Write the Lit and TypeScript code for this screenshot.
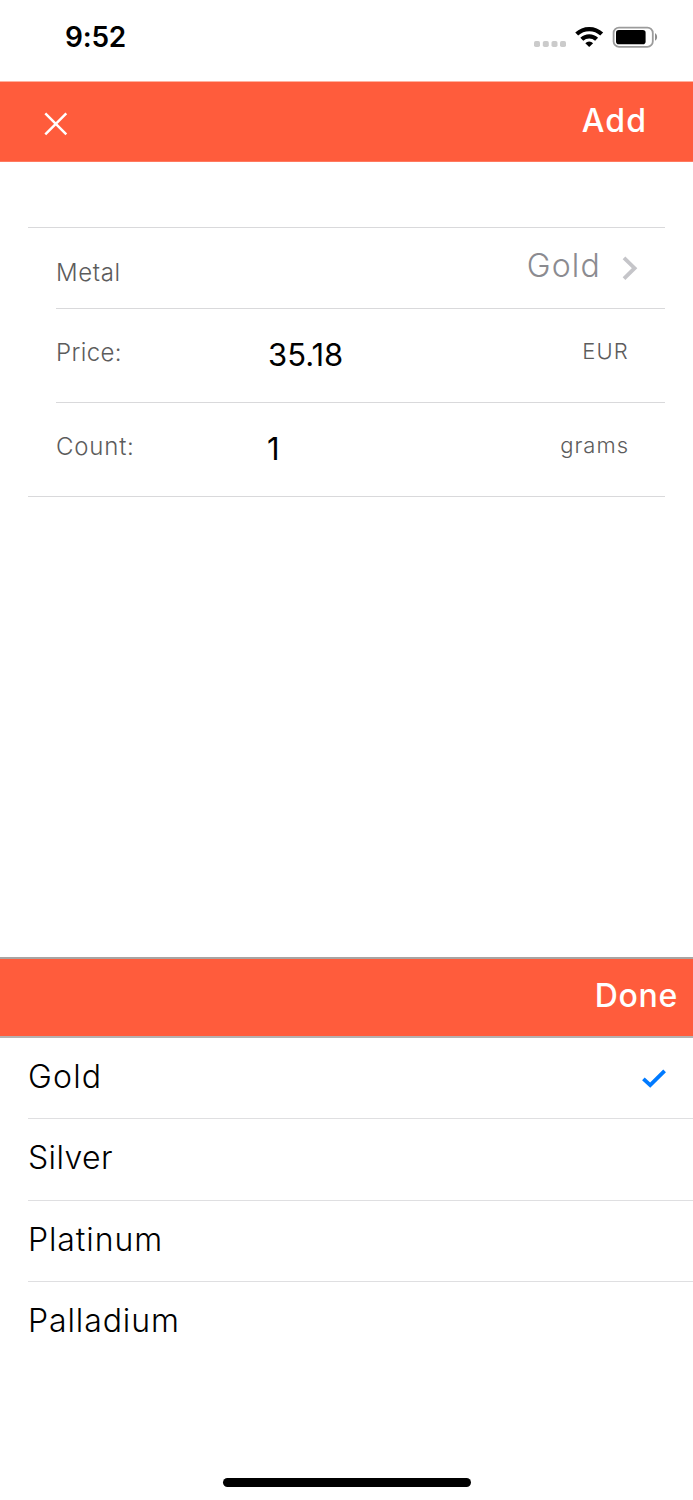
import { LitElement, html, css } from "lit";
import { customElement, state } from "lit/decorators.js";

@customElement("status-bar")
class StatusBar extends LitElement {
  static styles = css`
    :host { display: flex; justify-content: space-between; height: 81px; box-sizing: border-box; padding: 20px 32px 0 65px; }
    .time { font-size: 28px; line-height: 35px; font-weight: 600; letter-spacing: -0.2px; }
    .icons { width: 128px; height: 32px; }
  `;
  render() {
    return html`
      <span class="time">9:52</span>
      <svg class="icons" viewBox="533 20 128 32">
        <g fill="#cbcbcb">
          <rect x="534" y="41" width="6" height="6" rx="1.8" />
          <rect x="542.8" y="41" width="6" height="6" rx="1.8" />
          <rect x="551.5" y="41" width="6" height="6" rx="1.8" />
          <rect x="560" y="41" width="6" height="6" rx="1.8" />
        </g>
        <g fill="none" stroke="#000" stroke-width="4.2">
          <path d="M576.7 34.1a18 18 0 0 1 25 0" />
          <path d="M581.8 39.3a10.6 10.6 0 0 1 14.8 0" />
        </g>
        <path d="M585.3 43.2a5.6 5.6 0 0 1 7.8 0L589.2 47z" />
        <rect x="613.6" y="27.6" width="39.2" height="19.2" rx="5.4" fill="none" stroke="#9b9b9b" stroke-width="1.8" />
        <rect x="616" y="30" width="29.6" height="14.2" rx="2.8" />
        <path d="M655 33.3c2.8 1 2.8 6.4 0 7.4z" fill="#8e8e8e" />
      </svg>
    `;
  }
}

@customElement("app-root")
class AppRoot extends LitElement {
  @state() private metals = ["Gold", "Silver", "Platinum", "Palladium"];
  @state() private selected = "Gold";

  static styles = css`
    :host { display: flex; flex-direction: column; height: 1500px; background: #fff; color: #000; font-family: Inter, "Open Sans", sans-serif; overflow: hidden; }
    .nav { display: flex; justify-content: space-between; height: 81px; box-sizing: border-box; background: #ff5c3c; color: #fff; padding: 17px 47px 0 43px; border-top: 1px solid #ffb19f; border-bottom: 1px solid #ff7a60; }
    .close { width: 26px; height: 26px; margin-top: 12px; }
    .action { font-size: 32px; line-height: 44px; font-weight: 500; }
    .add { letter-spacing: 1.1px; margin-right: -1.1px; }
    .form { margin: 65px 28px 0; border-top: 1px solid #d9d9db; border-bottom: 1px solid #d9d9db; padding-left: 28px; }
    .row { display: grid; grid-template-columns: 211px 1fr auto; height: 94px; box-sizing: border-box; border-bottom: 1px solid #d9d9db; }
    .metal { height: 81px; }
    .last { height: 93px; border-bottom: 0; }
    .label { font-size: 24px; line-height: 30px; color: #5c5c5c; padding-top: 29px; font-weight: 350; letter-spacing: 0.4px; }
    .metal .label { padding-top: 30px; letter-spacing: 0.6px; }
    .last .label { letter-spacing: 0.8px; }
    .value { font-size: 31px; line-height: 40px; padding: 26px 0 0 1px; }
    .last .value { padding-left: 0; }
    .unit { font-size: 22px; line-height: 30px; color: #5c5c5c; padding: 27px 37px 0 0; font-weight: 350; }
    .eur { letter-spacing: 1.2px; margin-right: -1px; }
    .grams { letter-spacing: 1px; margin-right: -1px; }
    .choice { display: flex; color: #8b8b90; font-size: 32px; line-height: 40px; padding: 18px 27px 0 0; font-weight: 350; letter-spacing: 1.2px; }
    .chev { width: 16px; height: 24px; margin: 10px 0 0 21px; }
    .sheet { margin-top: auto; height: 543px; display: flex; flex-direction: column; }
    .toolbar { display: flex; justify-content: flex-end; height: 81px; box-sizing: border-box; background: #ff5c3c; color: #fff; border-top: 2px solid #a9a4a2; border-bottom: 2px solid #b5b1b0; padding: 15px 15px 0 0; }
    .toolbar .action { letter-spacing: 0.7px; }
    .option { display: flex; justify-content: space-between; height: 81.3px; box-sizing: border-box; margin-left: 28px; border-bottom: 1px solid #dfdfe1; font-size: 32px; line-height: 40px; padding: 19px 26px 0 0; letter-spacing: 0.9px; font-weight: 350; }
    .option:nth-child(1) { letter-spacing: 1.2px; }
    .option:nth-child(2) { letter-spacing: 0.4px; }
    .option:last-child { border-bottom: 0; }
    .check { width: 26px; height: 22px; margin-top: 11px; }
    .home { width: 248px; height: 9px; border-radius: 5px; background: #000; margin: auto auto 13px 222.5px; }
  `;

  render() {
    return html`
      <status-bar></status-bar>
      <div class="nav">
        <svg class="close" viewBox="0 0 26 26" fill="none" stroke="#fff" stroke-width="2.5"><path d="M2.3 2.3 23.3 23.3M23.3 2.3 2.3 23.3" /></svg>
        <span class="action add">Add</span>
      </div>
      <div class="form">
        <div class="row metal">
          <span class="label">Metal</span><span></span>
          <span class="choice">${this.selected}<svg class="chev" viewBox="0 0 16 24" fill="none" stroke="#c5c5c9" stroke-width="3.8"><path d="M2 1.8 12.6 12.2 2 22.6" /></svg></span>
        </div>
        <div class="row">
          <span class="label">Price:</span><span class="value">35.18</span><span class="unit eur">EUR</span>
        </div>
        <div class="row last">
          <span class="label">Count:</span><span class="value">1</span><span class="unit grams">grams</span>
        </div>
      </div>
      <div class="sheet">
        <div class="toolbar"><span class="action">Done</span></div>
        <div>
          ${this.metals.map((m) => html`
            <div class="option" @click=${() => (this.selected = m)}>
              <span>${m}</span>
              ${m === this.selected
                ? html`<svg class="check" viewBox="0 0 26 22" fill="none" stroke="#007aff" stroke-width="3.8"><path d="M2.4 10.8 9.2 17.2 23.6 2.8" /></svg>`
                : ""}
            </div>`)}
        </div>
        <div class="home"></div>
      </div>
    `;
  }
}
